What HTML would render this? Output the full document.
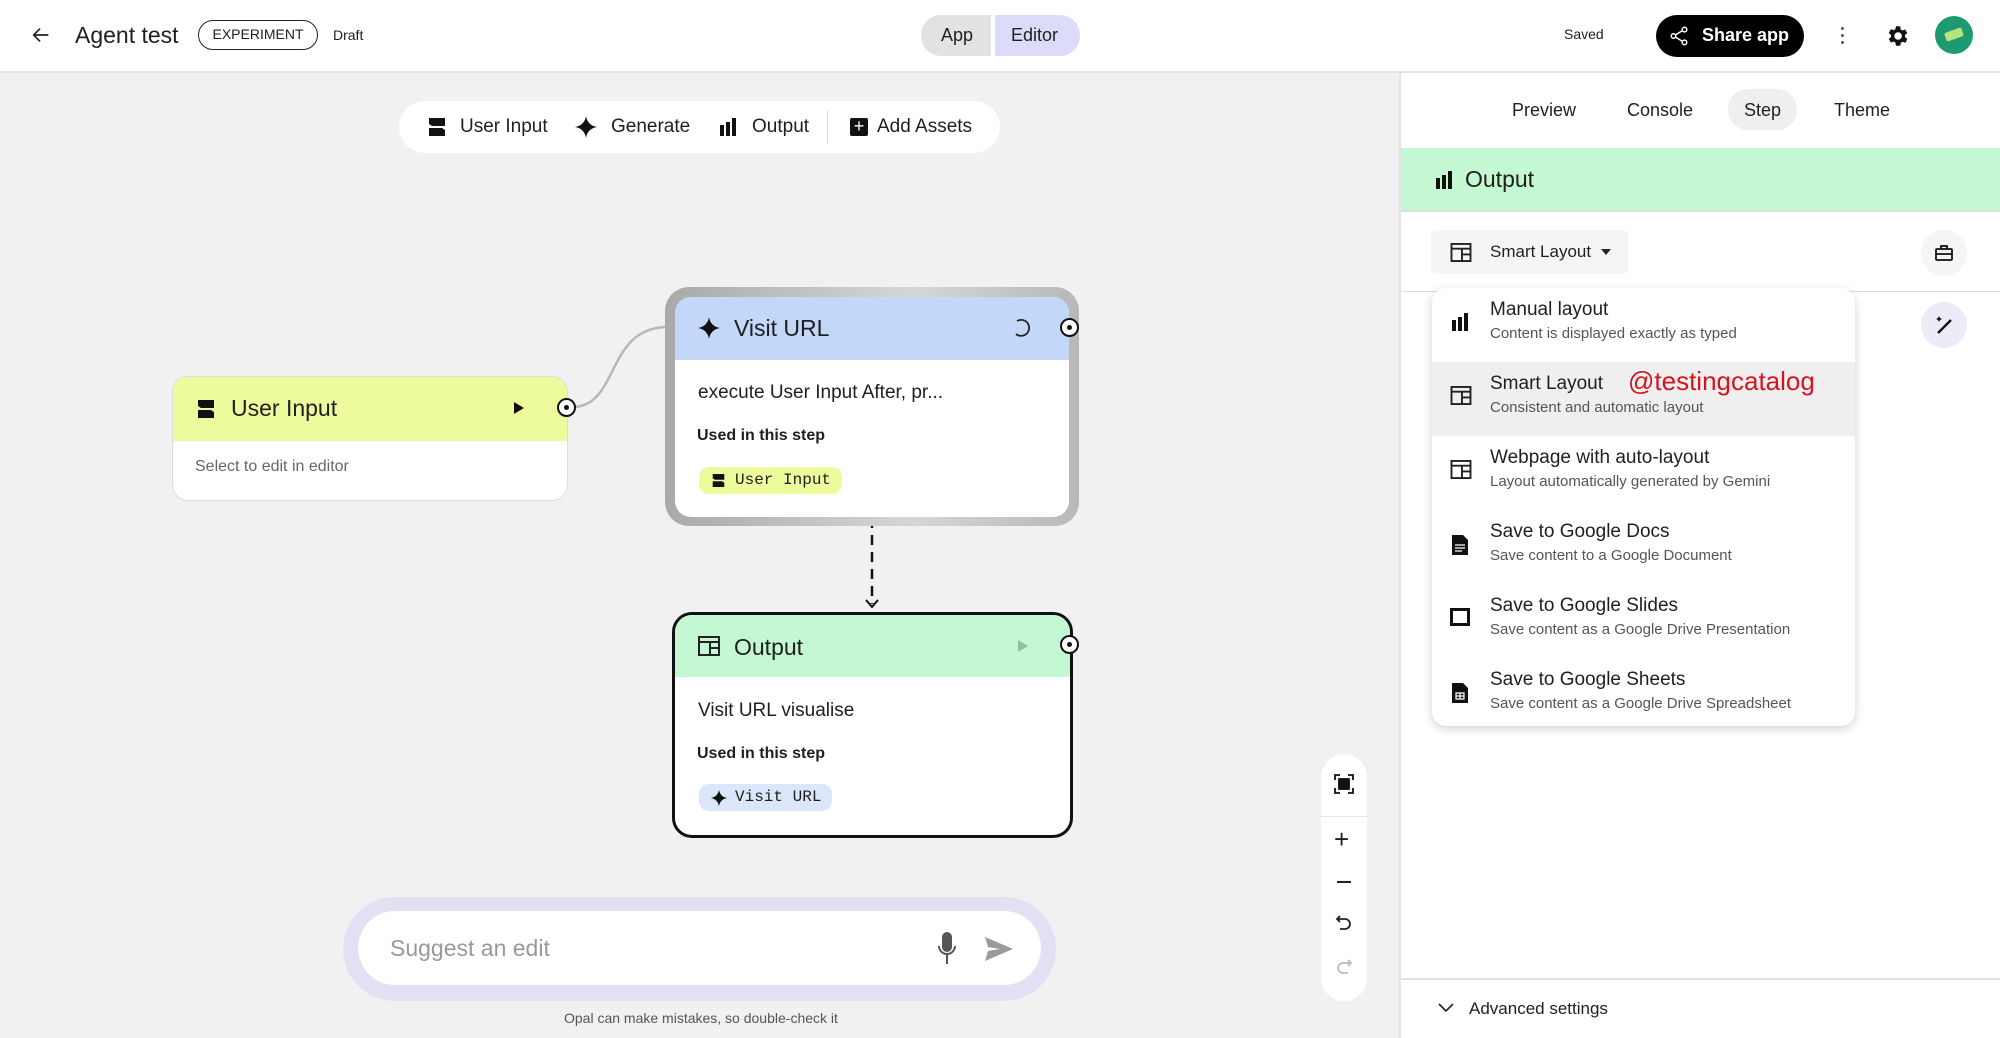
<!DOCTYPE html>
<html><head><meta charset="utf-8"><style>
*{box-sizing:border-box;margin:0;padding:0}
body{width:2000px;height:1038px;position:relative;overflow:hidden;font-family:"Liberation Sans",Arial,sans-serif;color:#1f1f1f;background:#f1f1f1}
.a{position:absolute}
.hdr{left:0;top:0;width:2000px;height:73px;background:#fff;border-bottom:2px solid #e3e3e3}
.t{white-space:nowrap}
.node{background:#fff;border-radius:16px;overflow:hidden}
.mono{font-family:"Liberation Mono",monospace}
.mi{left:0;width:423px;height:74px}
.mi .ti{position:absolute;left:58px;top:11px;font-size:19px;color:#1f1f1f}
.mi .su{position:absolute;left:58px;top:37px;font-size:15px;color:#555}
.mi svg{position:absolute;left:18px;top:24px}
</style></head><body>
<div class="a hdr"></div>
<svg class="a" style="left:30px;top:24px" width="22" height="22" viewBox="0 0 24 24"><path d="M20 12H5M11 5l-7 7 7 7" fill="none" stroke="#222" stroke-width="1.8"/></svg>
<div class="a t" style="left:75px;top:22px;font-size:23px;font-weight:500">Agent test</div>
<div class="a t" style="left:198px;top:20px;width:120px;height:30px;border:1.5px solid #222;border-radius:15px;font-size:14px;text-align:center;line-height:27px">EXPERIMENT</div>
<div class="a t" style="left:333px;top:27px;font-size:14px">Draft</div>
<div class="a" style="left:921px;top:15px;width:70px;height:41px;background:#e2e2e2;border-radius:20px 0 0 20px"></div>
<div class="a" style="left:995px;top:15px;width:85px;height:41px;background:#dcdcfa;border-radius:0 20px 20px 0"></div>
<div class="a t" style="left:941px;top:25px;font-size:18px;font-weight:500">App</div>
<div class="a t" style="left:1011px;top:25px;font-size:18px;font-weight:500">Editor</div>
<div class="a t" style="left:1564px;top:26px;font-size:14px">Saved</div>
<div class="a" style="left:1656px;top:15px;width:148px;height:42px;background:#000;border-radius:21px"></div>
<svg class="a" style="left:1668px;top:25px" width="22" height="22" viewBox="0 0 24 24" fill="none" stroke="#fff" stroke-width="1.6"><circle cx="18" cy="5" r="2.5"/><circle cx="6" cy="12" r="2.5"/><circle cx="18" cy="19" r="2.5"/><path d="M8.2 10.8l7.6-4.6M8.2 13.2l7.6 4.6"/></svg>
<div class="a t" style="left:1702px;top:25px;font-size:18px;color:#fff;font-weight:bold">Share app</div>
<div class="a" style="left:1841px;top:27px;width:3px;height:3px;background:#555;border-radius:2px;box-shadow:0 7px 0 #555,0 14px 0 #555"></div>
<svg class="a" style="left:1884px;top:23px" width="26" height="26" viewBox="0 0 24 24"><path fill="#111" d="M19.4 13a7.5 7.5 0 0 0 0-2l2.1-1.6-2-3.5-2.5 1a7.5 7.5 0 0 0-1.7-1L15 3h-4l-.4 2.7a7.5 7.5 0 0 0-1.7 1l-2.5-1-2 3.5L6.5 11a7.5 7.5 0 0 0 0 2l-2.1 1.6 2 3.5 2.5-1a7.5 7.5 0 0 0 1.7 1L11 21h4l.4-2.7a7.5 7.5 0 0 0 1.7-1l2.5 1 2-3.5zM13 15.5a3.5 3.5 0 1 1 0-7 3.5 3.5 0 0 1 0 7z"/></svg>
<div class="a" style="left:1935px;top:16px;width:38px;height:38px;border-radius:50%;background:#1d9a72"></div>
<div class="a" style="left:1945px;top:30px;width:18px;height:9px;background:#b6e37a;transform:rotate(-20deg);border-radius:2px"></div>

<div class="a" style="left:399px;top:101px;width:601px;height:52px;background:#fff;border-radius:26px"></div>
<svg class="a" style="left:428px;top:117px" width="18" height="20" viewBox="0 0 18 20"><path d="M1 1h16v8H4L1 7zM1 11h13l3 2v6H1z" fill="#111"/></svg>
<div class="a t" style="left:460px;top:116px;font-size:19px">User Input</div>
<svg class="a" style="left:574px;top:115px" width="24" height="24" viewBox="0 0 24 24"><path d="M12 1C12.8 7 17 11.2 23 12 17 12.8 12.8 17 12 23 11.2 17 7 12.8 1 12 7 11.2 11.2 7 12 1z" fill="#111"/></svg>
<div class="a t" style="left:611px;top:116px;font-size:19px">Generate</div>
<svg class="a" style="left:719px;top:117px" width="18" height="20" viewBox="0 0 18 20"><path d="M1 8h4v11H1zM7 5h4v14H7zM13 1h4v18h-4z" fill="#111"/></svg>
<div class="a t" style="left:752px;top:116px;font-size:19px">Output</div>
<div class="a" style="left:827px;top:110px;width:1px;height:34px;background:#ddd"></div>
<div class="a" style="left:850px;top:118px;width:18px;height:18px;background:#111;border-radius:2px;color:#fff;font-size:18px;line-height:17px;text-align:center">+</div>
<div class="a t" style="left:877px;top:116px;font-size:19px">Add Assets</div>

<svg class="a" style="left:0;top:0" width="1400" height="1038">
<path d="M572 407 C620 407,605 327,668 327" fill="none" stroke="#b8b8b8" stroke-width="2.5"/>
<path d="M872 518 V604" stroke="#111" stroke-width="2.5" stroke-dasharray="10 7"/>
<path d="M866 600l6 7 6-7" fill="none" stroke="#111" stroke-width="2"/>
</svg>

<div class="a node" style="left:172px;top:376px;width:396px;height:125px;border:1px solid #ddd">
<div style="height:64px;background:#eefb9c"></div>
</div>
<svg class="a" style="left:197px;top:399px" width="18" height="20" viewBox="0 0 18 20"><path d="M1 1h16v8H4L1 7zM1 11h13l3 2v6H1z" fill="#111"/></svg>
<div class="a t" style="left:231px;top:395px;font-size:23px">User Input</div>
<svg class="a" style="left:512px;top:400px" width="14" height="16"><path d="M2 2l10 6-10 6z" fill="#111"/></svg>
<div class="a" style="left:557px;top:398px;width:19px;height:19px;border:2.5px solid #111;border-radius:50%;background:#fff"></div>
<div class="a" style="left:564px;top:405px;width:5px;height:5px;background:#111;border-radius:50%"></div>
<div class="a t" style="left:195px;top:458px;font-size:16px;color:#666">Select to edit in editor</div>

<div class="a" style="left:665px;top:287px;width:414px;height:239px;border-radius:24px;background:linear-gradient(90deg,#a9a9a9,#d6d6d6 60%,#b8b8b8)"></div>
<div class="a node" style="left:675px;top:297px;width:394px;height:220px">
<div style="height:63px;background:#c3d7f8"></div></div>
<svg class="a" style="left:697px;top:316px" width="24" height="24" viewBox="0 0 24 24"><path d="M12 1C12.8 7 17 11.2 23 12 17 12.8 12.8 17 12 23 11.2 17 7 12.8 1 12 7 11.2 11.2 7 12 1z" fill="#111"/></svg>
<div class="a t" style="left:734px;top:315px;font-size:23px">Visit URL</div>
<svg class="a" style="left:1010px;top:317px" width="22" height="22" viewBox="0 0 22 22"><path d="M7 4a8 8 0 1 1 -1 13" fill="none" stroke="#222" stroke-width="1.8"/></svg>
<div class="a" style="left:1060px;top:318px;width:19px;height:19px;border:2.5px solid #111;border-radius:50%;background:#fff"></div>
<div class="a" style="left:1067px;top:325px;width:5px;height:5px;background:#111;border-radius:50%"></div>
<div class="a t" style="left:698px;top:382px;font-size:19px">execute User Input After, pr...</div>
<div class="a t" style="left:697px;top:427px;font-size:16px;font-weight:bold">Used in this step</div>
<div class="a" style="left:699px;top:467px;width:143px;height:27px;background:#eefb9c;border-radius:10px"></div>
<svg class="a" style="left:712px;top:473px" width="13" height="15" viewBox="0 0 18 20"><path d="M1 1h16v8H4L1 7zM1 11h13l3 2v6H1z" fill="#111"/></svg>
<div class="a t mono" style="left:735px;top:471px;font-size:16px">User Input</div>

<div class="a node" style="left:672px;top:612px;width:401px;height:226px;border:3.5px solid #111;border-radius:20px">
<div style="height:62px;background:#c3f8d3"></div></div>
<svg class="a" style="left:698px;top:636px" width="22" height="20" viewBox="0 0 22 20" fill="none" stroke="#222" stroke-width="2"><rect x="1" y="1" width="20" height="18"/><path d="M1 6h20M12 6v13M12 12h9"/></svg>
<div class="a t" style="left:734px;top:634px;font-size:23px">Output</div>
<svg class="a" style="left:1016px;top:638px" width="14" height="16"><path d="M2 2l10 6-10 6z" fill="#8fbf9c"/></svg>
<div class="a" style="left:1060px;top:635px;width:19px;height:19px;border:2.5px solid #111;border-radius:50%;background:#fff"></div>
<div class="a" style="left:1067px;top:642px;width:5px;height:5px;background:#111;border-radius:50%"></div>
<div class="a t" style="left:698px;top:700px;font-size:19px">Visit URL visualise</div>
<div class="a t" style="left:697px;top:745px;font-size:16px;font-weight:bold">Used in this step</div>
<div class="a" style="left:699px;top:784px;width:133px;height:27px;background:#dce6fa;border-radius:10px"></div>
<svg class="a" style="left:710px;top:789px" width="18" height="18" viewBox="0 0 24 24"><path d="M12 1C12.8 7 17 11.2 23 12 17 12.8 12.8 17 12 23 11.2 17 7 12.8 1 12 7 11.2 11.2 7 12 1z" fill="#111"/></svg>
<div class="a t mono" style="left:735px;top:788px;font-size:16px">Visit URL</div>

<div class="a" style="left:1321px;top:754px;width:46px;height:247px;background:#fff;border-radius:23px"></div>
<div class="a" style="left:1321px;top:816px;width:46px;height:1px;background:#e5e5e5"></div>
<svg class="a" style="left:1333px;top:773px" width="22" height="22" viewBox="0 0 22 22" fill="none" stroke="#111" stroke-width="1.8"><path d="M2 7V2h5M15 2h5v5M20 15v5h-5M7 20H2v-5"/><rect x="6" y="6" width="10" height="10" fill="#111"/></svg>
<div class="a t" style="left:1334px;top:824px;font-size:26px;font-weight:300">+</div>
<div class="a" style="left:1337px;top:881px;width:14px;height:2px;background:#222"></div>
<svg class="a" style="left:1334px;top:913px" width="20" height="20" viewBox="0 0 20 20" fill="none" stroke="#222" stroke-width="1.8"><path d="M6 3L3 6l3 3M3 6h8a5 5 0 0 1 0 10H6"/></svg>
<svg class="a" style="left:1334px;top:957px" width="20" height="20" viewBox="0 0 20 20" fill="none" stroke="#bbb" stroke-width="1.8"><path d="M14 3l3 3-3 3M17 6H9a5 5 0 0 0 0 10h5"/></svg>

<div class="a" style="left:343px;top:897px;width:713px;height:104px;background:#e1e1f3;border-radius:52px"></div>
<div class="a" style="left:358px;top:911px;width:683px;height:74px;background:#fff;border-radius:37px"></div>
<div class="a t" style="left:390px;top:935px;font-size:23px;color:#999">Suggest an edit</div>
<svg class="a" style="left:936px;top:932px" width="22" height="34" viewBox="0 0 22 34" fill="none" stroke="#555" stroke-width="2"><rect x="7" y="1" width="8" height="18" rx="4" fill="#555"/><path d="M3 14a8 8 0 0 0 16 0M11 22v10"/></svg>
<svg class="a" style="left:984px;top:936px" width="30" height="26" viewBox="0 0 30 26"><path d="M1 1l28 12L1 25l3-10 12-2-12-2z" fill="#9a9a9a"/></svg>
<div class="a t" style="left:564px;top:1010px;font-size:14px;color:#555">Opal can make mistakes, so double-check it</div>

<div class="a" style="left:1399px;top:73px;width:601px;height:965px;background:#fff;border-left:2px solid #e3e3e3"></div>
<div class="a" style="left:1728px;top:89px;width:69px;height:41px;background:#efefef;border-radius:20px"></div>
<div class="a t" style="left:1512px;top:100px;font-size:18px;font-weight:500">Preview</div>
<div class="a t" style="left:1627px;top:100px;font-size:18px;font-weight:500">Console</div>
<div class="a t" style="left:1744px;top:100px;font-size:18px;font-weight:500">Step</div>
<div class="a t" style="left:1834px;top:100px;font-size:18px;font-weight:500">Theme</div>
<div class="a" style="left:1401px;top:148px;width:599px;height:64px;background:#c3f8d3;border-bottom:2px solid #ddd"></div>
<svg class="a" style="left:1435px;top:170px" width="18" height="20" viewBox="0 0 18 20"><path d="M1 8h4v11H1zM7 5h4v14H7zM13 1h4v18h-4z" fill="#111"/></svg>
<div class="a t" style="left:1465px;top:166px;font-size:23px;font-weight:500">Output</div>
<div class="a" style="left:1431px;top:230px;width:197px;height:44px;background:#f5f5f5;border-radius:6px"></div>
<svg class="a" style="left:1450px;top:243px" width="22" height="19" viewBox="0 0 22 20" fill="none" stroke="#222" stroke-width="2"><rect x="1" y="1" width="20" height="18"/><path d="M1 6h20M12 6v13M12 12h9"/></svg>
<div class="a t" style="left:1490px;top:242px;font-size:17px">Smart Layout</div>
<svg class="a" style="left:1600px;top:248px" width="12" height="8"><path d="M1 1h10L6 7z" fill="#222"/></svg>
<div class="a" style="left:1921px;top:230px;width:46px;height:46px;border-radius:50%;background:#f5f5f5"></div>
<svg class="a" style="left:1934px;top:243px" width="20" height="20" viewBox="0 0 20 20" fill="none" stroke="#111" stroke-width="1.8"><rect x="2" y="6" width="16" height="11" rx="1"/><path d="M7 6V3h6v3M2 11h16"/></svg>
<div class="a" style="left:1401px;top:291px;width:599px;height:1px;background:#ddd"></div>
<div class="a" style="left:1921px;top:302px;width:46px;height:46px;border-radius:50%;background:#ececf8"></div>
<svg class="a" style="left:1933px;top:313px" width="24" height="24" viewBox="0 0 24 24"><path d="M5 20L18 7" stroke="#111" stroke-width="2.4"/><path d="M6 3l1 2 2 1-2 1-1 2-1-2-2-1 2-1z" fill="#111"/></svg>

<div class="a" style="left:1432px;top:288px;width:423px;height:438px;background:#fff;border-radius:14px;box-shadow:0 3px 10px rgba(0,0,0,.18);overflow:hidden">
<div class="a mi" style="top:0"><svg width="20" height="20" viewBox="0 0 18 20"><path d="M1 8h4v11H1zM7 5h4v14H7zM13 1h4v18h-4z" fill="#111"/></svg><div class="ti">Manual layout</div><div class="su">Content is displayed exactly as typed</div></div>
<div class="a mi" style="top:74px;background:#efefef"><svg width="22" height="19" viewBox="0 0 22 20" fill="none" stroke="#222" stroke-width="2"><rect x="1" y="1" width="20" height="18"/><path d="M1 6h20M12 6v13M12 12h9"/></svg><div class="ti">Smart Layout</div><div class="su">Consistent and automatic layout</div>
<div style="position:absolute;left:196px;top:4px;font-size:26px;color:#d4141f" class="t">@testingcatalog</div></div>
<div class="a mi" style="top:148px"><svg width="22" height="19" viewBox="0 0 22 20" fill="none" stroke="#222" stroke-width="2"><rect x="1" y="1" width="20" height="18"/><path d="M1 6h20M12 6v13M12 12h9"/></svg><div class="ti">Webpage with auto-layout</div><div class="su">Layout automatically generated by Gemini</div></div>
<div class="a mi" style="top:222px"><svg width="20" height="22" viewBox="0 0 18 22"><path d="M1 1h11l5 5v15H1z" fill="#111"/><path d="M4 11h10M4 14h10M4 17h7" stroke="#fff" stroke-width="1.3"/></svg><div class="ti">Save to Google Docs</div><div class="su">Save content to a Google Document</div></div>
<div class="a mi" style="top:296px"><svg width="20" height="18" viewBox="0 0 20 18"><rect x="1.5" y="1.5" width="17" height="15" fill="none" stroke="#111" stroke-width="3"/></svg><div class="ti">Save to Google Slides</div><div class="su">Save content as a Google Drive Presentation</div></div>
<div class="a mi" style="top:370px"><svg width="20" height="22" viewBox="0 0 18 22"><path d="M1 1h11l5 5v15H1z" fill="#111"/><path d="M5 11h8v6H5zM9 11v6M5 14h8" stroke="#fff" stroke-width="1.2" fill="none"/></svg><div class="ti">Save to Google Sheets</div><div class="su">Save content as a Google Drive Spreadsheet</div></div>
</div>

<div class="a" style="left:1401px;top:978px;width:599px;height:2px;background:#e0e0e0"></div>
<svg class="a" style="left:1438px;top:1003px" width="16" height="10"><path d="M1 1l7 7 7-7" fill="none" stroke="#222" stroke-width="1.6"/></svg>
<div class="a t" style="left:1469px;top:999px;font-size:17px">Advanced settings</div>
</body></html>
